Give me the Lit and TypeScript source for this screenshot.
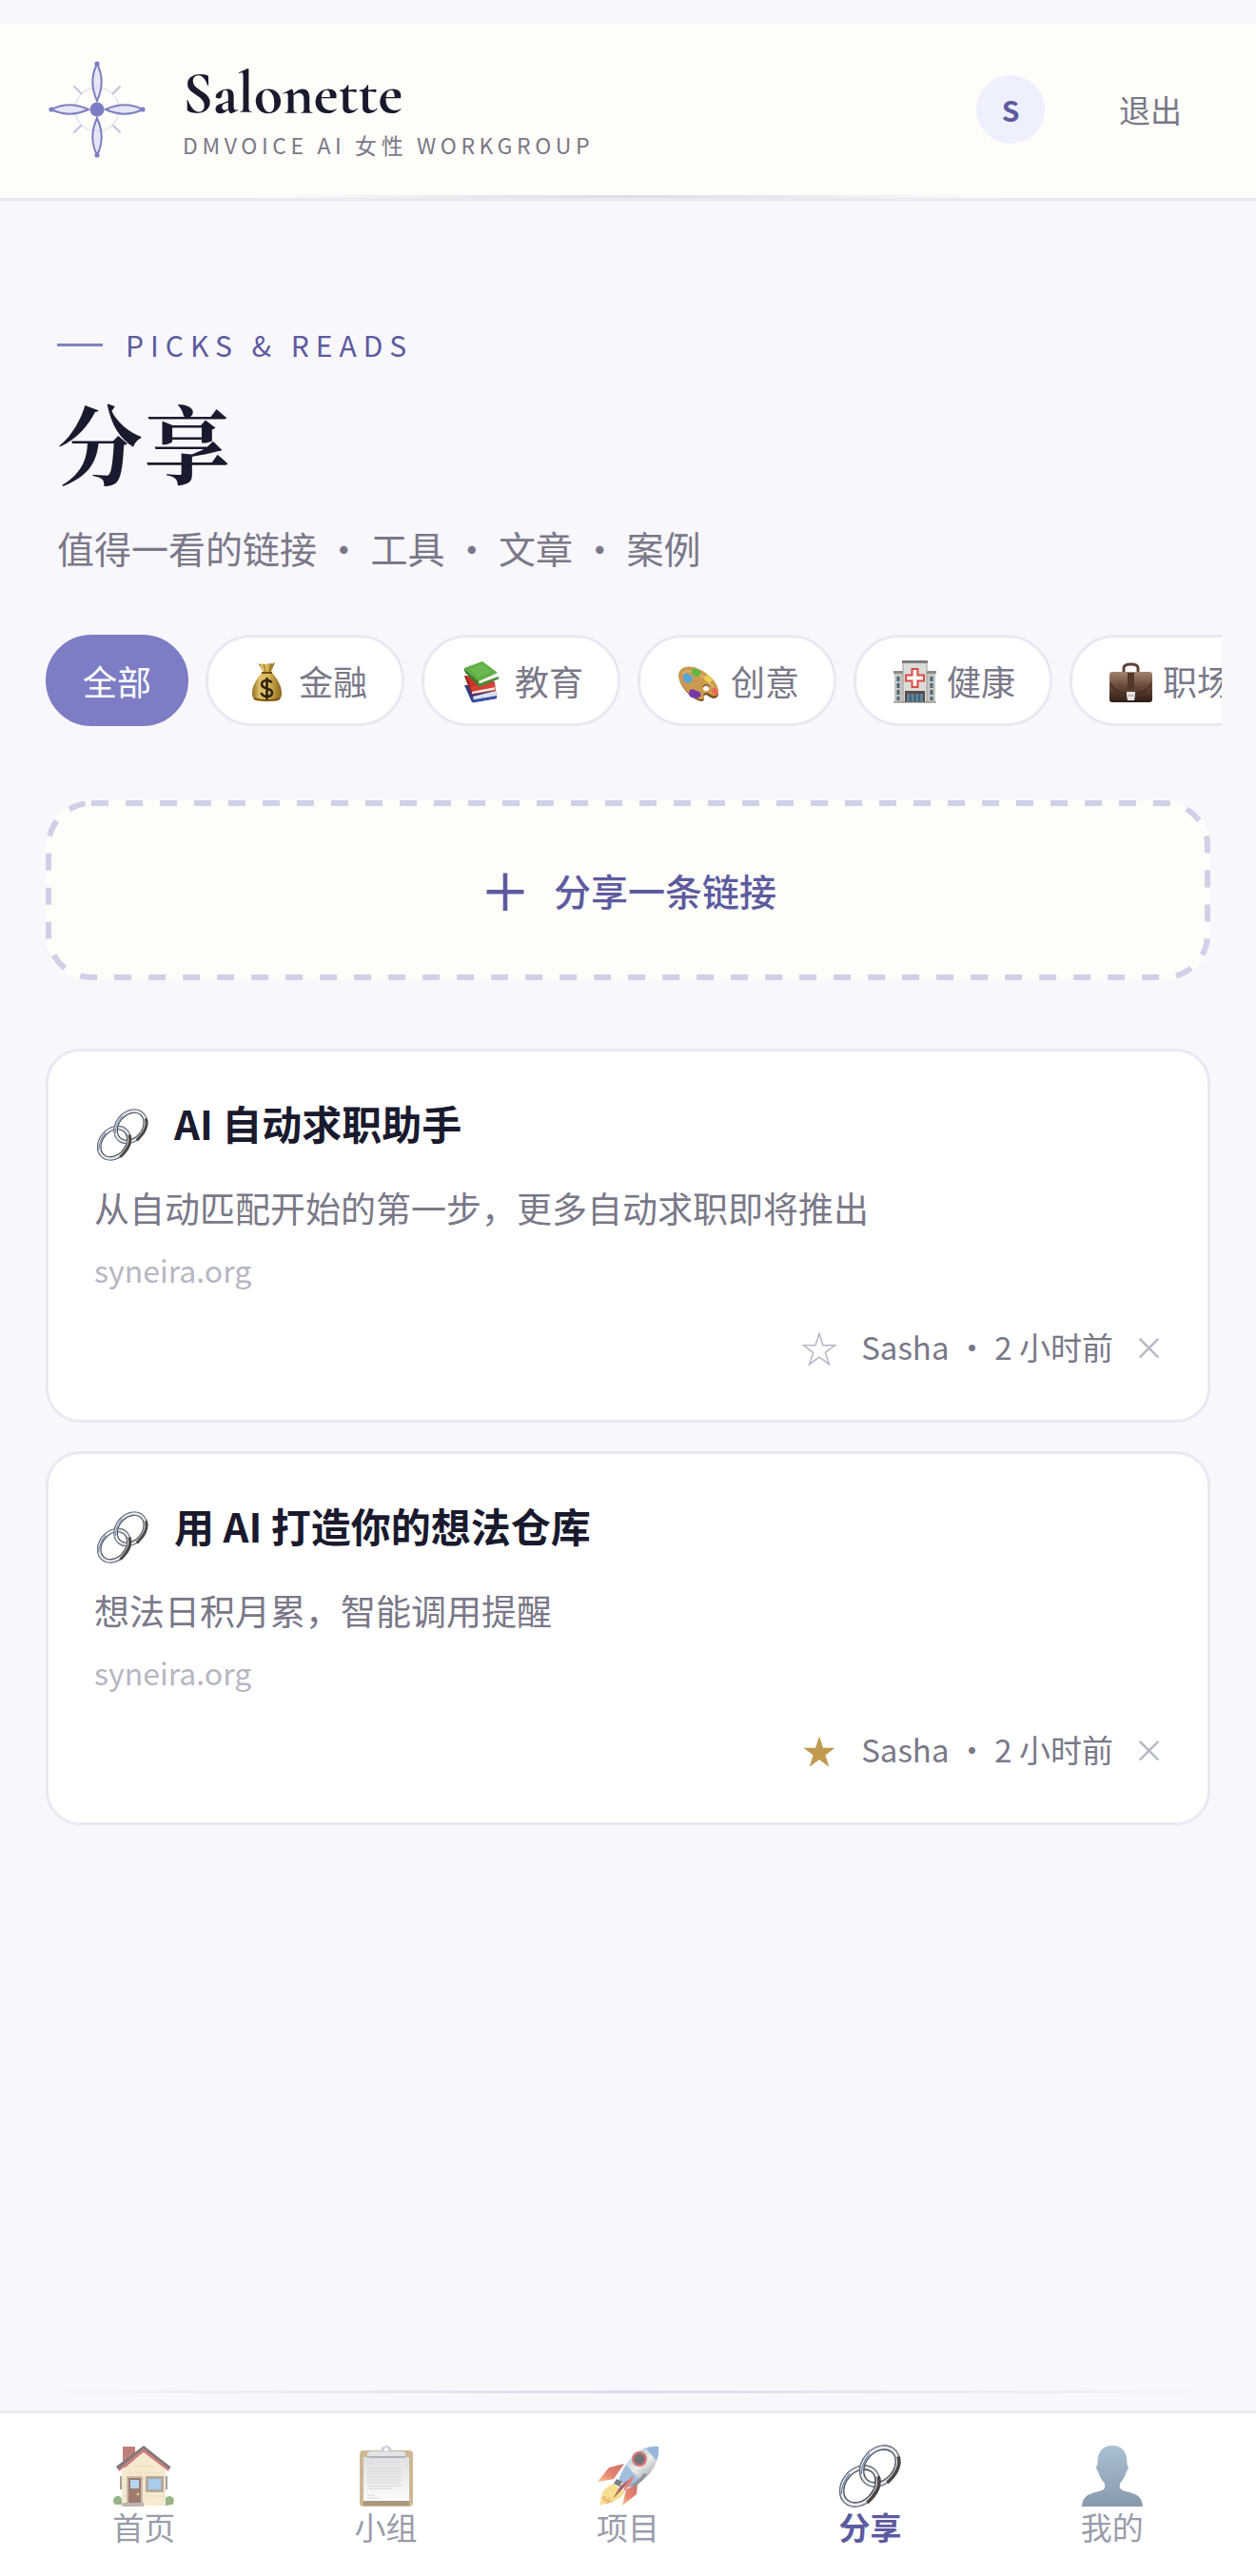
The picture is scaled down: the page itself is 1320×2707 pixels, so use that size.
import { LitElement, html, css, svg, nothing, type TemplateResult } from "lit";
import { customElement, property, state } from "lit/decorators.js";
import { classMap } from "lit/directives/class-map.js";

const ring = svg`
  <g fill="none">
    <ellipse rx="21.500" ry="16.500" stroke="#3c383a" stroke-width="5.400"/>
    <ellipse rx="21.700" ry="16.700" stroke="#7f8b9c" stroke-width="4.200"/>
    <ellipse rx="21.600" ry="16.600" stroke="#eceff3" stroke-width="2.400"/>
    <path d="M-8 17.500Q14 19.500 20.500 8" stroke="#4d4645" stroke-width="3.600"/>
    <path d="M-19 -9Q-11 -16 3 -16.500" stroke="#6a81a8" stroke-width="1.200"/>
  </g>`;

const linkIcon = html`<svg class="pic" viewBox="0 0 64 64" aria-hidden="true">
  <defs><clipPath id="link-over"><rect x="30" y="32" width="20" height="20"/></clipPath></defs>
  <g transform="translate(21.500 42.500) rotate(-49)">${ring}</g>
  <g transform="translate(42.500 21.500) rotate(-49)">${ring}</g>
  <g clip-path="url(#link-over)"><g transform="translate(21.500 42.500) rotate(-49)">${ring}</g></g>
</svg>`;

const moneyIcon = html`<svg class="pic" viewBox="0 0 45 45" aria-hidden="true">
  <defs><linearGradient id="gold"><stop offset="0" stop-color="#8f6c1d"/><stop offset=".25" stop-color="#e0c26a"/><stop offset=".55" stop-color="#dcb95a"/><stop offset="1" stop-color="#8a6418"/></linearGradient></defs>
  <path d="M13 3q3 2 5 0 3 2 6 0 3 2 7-1-2 5-4 10H18Q16 7 13 3z" fill="url(#gold)"/>
  <path d="M19 4l2 8M27 3l-2 9" stroke="#8a6a22" stroke-width="1" fill="none"/>
  <path d="M17 13h11c5 6 10 13 10 22 0 6-4 8-8 8H15c-5 0-8-3-8-8 0-9 5-16 10-22z" fill="url(#gold)"/>
  <path d="M17 13h11" stroke="#6f4f16" stroke-width="2"/>
  <path d="M9 40q13 4 27 0" stroke="#7b5715" stroke-width="2" fill="none"/>
  <path d="M27.500 23.500c-1-2-3-2.500-5-2.500-3 0-5.500 1.500-5.500 4 0 6 11 3 11 9 0 3-2.500 4-5.500 4s-5-1.500-6-4M22.500 18v23" stroke="#2d2413" stroke-width="2.600" fill="none"/>
</svg>`;

const booksIcon = html`<svg class="pic" viewBox="0 0 45 45" aria-hidden="true">
  <path d="M3 26l8 18 26-4-1-8-16-6z" fill="#2c3f86"/><path d="M12 38l24-6 1 6-24 4z" fill="#dfe2ec"/><path d="M11 41.500l26-4.500v3L12 44.500z" fill="#3a52a5"/>
  <path d="M3 16l8 20 25-4-1-9-12-6z" fill="#c9342b"/><path d="M11 32l24-4v3L11 35z" fill="#f0ece4"/><path d="M3 16l8 20v-5L5 17z" fill="#8d1f1b"/><path d="M9 28l26-6v6l-24 5z" fill="#d44135"/>
  <path d="M3 8L22 1l16 12-20 10z" fill="#5fae45"/><path d="M3 8l15 15v4L4 13q-2-3-1-5z" fill="#37812c"/><path d="M18 22l20-9-1 6-18 7z" fill="#f4f2e9"/><path d="M17 25l22-8v2.500L18 28z" fill="#3f8c33"/><path d="M8 9l14-5 10 7-14 7z" fill="#78c25b" opacity=".5"/>
</svg>`;

const paletteIcon = html`<svg class="pic" viewBox="0 0 45 45" aria-hidden="true">
  <path d="M2 18C2 9 10 6 18 8c14 4 26 18 25 28-1 4-5 5-8 3-3-1-4-4-7-2-2 1 2 5-2 6C17 43 2 28 2 18z" fill="#7c5220"/>
  <path d="M1 16C1 8 9 5 17 7c14 4 27 17 26 27-1 4-5 4-8 2-3-2-5-3-7-1s2 5-2 6C17 42 1 26 1 16z" fill="#cc9a4f"/>
  <path d="M5 14q8-6 20 2 10 7 15 16" stroke="#dcb26b" stroke-width="2" fill="none"/>
  <circle cx="30" cy="29" r="3.200" fill="#fff"/><path d="M27 28a3.200 3.200 0 0 1 6 0" fill="none" stroke="#6f4618" stroke-width="1.200"/>
  <path d="M6 16q2-5 6-1 6 2 3 7-3 3-7 1-3-3-2-7z" fill="#58a5d8"/>
  <path d="M16 9q3-2 5 1 5 1 3 5-3 3-7 1-4-3-1-7z" fill="#5cbb45"/>
  <path d="M29 16q4-2 4 1 5 1 3 5-3 2-5 0-5-2-2-6z" fill="#ecd04e"/>
  <path d="M36 30q3-3 5 0 3 5 0 7-3-1-5-4z" fill="#ea6a58"/>
  <path d="M13 31q3-2 7 1 6 1 4 6-3 3-6 1-4 1-6-3z" fill="#7438ac"/>
</svg>`;

const hospitalIcon = html`<svg class="pic" viewBox="0 0 45 45" aria-hidden="true">
  <path d="M1 13h43v31H1z" fill="#c6c6c2"/><path d="M0 11h45v3H0z" fill="#8b8d8b"/>
  <path d="M10 1h25v43H10z" fill="#dcdcd8"/><path d="M9 0h27v3H9z" fill="#7d7f7d"/>
  <path d="M5 17v25M40 17v25" stroke="#4a6777" stroke-width="3" stroke-dasharray="5 2"/>
  <path d="M19.500 9h6v6.500h6.500v6h-6.500V28h-6v-6.500H13v-6h6.500z" fill="#fff4f2" stroke="#d84a45" stroke-width="2"/>
  <path d="M12 32h21v12H12z" fill="#5a4b46"/><path d="M14 35h17v9H14z" fill="#5f8298"/><path d="M18 35v9M22.500 35v9M27 35v9" stroke="#2f4857"/>
  <path d="M10 3v41M35 3v41" stroke="#9c9c97"/><path d="M0 44h45" stroke="#77726b"/>
</svg>`;

const briefcaseIcon = html`<svg class="pic" viewBox="0 0 45 45" aria-hidden="true">
  <defs><linearGradient id="leather" x2="0" y2="1"><stop offset="0" stop-color="#a38470"/><stop offset=".45" stop-color="#6b4c3c"/><stop offset="1" stop-color="#2f1d15"/></linearGradient></defs>
  <path d="M15 14V8q0-4 7.500-4T30 8v6" fill="none" stroke="#5e4437" stroke-width="3"/>
  <rect y="12" width="45" height="32" rx="3" fill="url(#leather)"/>
  <path d="M1 24q4 9 16 11h11q12-2 16-11" stroke="#3e281d" fill="none" stroke-width="1.200"/>
  <path d="M19 13h7v17h-7z" fill="#4f372b"/>
  <path d="M18 33h9v4l-1 5h-7l-1-5z" fill="#e8e6e3"/><path d="M18.500 37h8" stroke="#9a9692"/>
</svg>`;

const houseIcon = html`<svg class="pic" viewBox="0 0 64 64" aria-hidden="true">
  <path d="M10 1h13v22H10z" fill="#9e3a33"/>
  <path d="M9 26L33 6l22 19v38H9z" fill="#f0deb6"/>
  <path d="M9 35h46M9 41h46M9 47h46M9 53h46M15 29h34M22 22h20" stroke="#dcc797" stroke-width=".8"/>
  <path d="M4 22L32 1l28 21-2 5L32 7 6 27z" fill="#b23a36"/><path d="M3 22L32 0l29 23-3 1L32 3 5 25z" fill="#3b3335"/>
  <path d="M14 32h17v28H14z" fill="#ae977d"/><path d="M16 34h13v26H16z" fill="#6c3423"/><path d="M18 36h9v9h-9z" fill="#8fc0ea"/><circle cx="26" cy="51" r="1.400" fill="#e2b74c"/>
  <path d="M34 32h19v17H34z" fill="#8f7c68"/><path d="M37 35h13v11H37z" fill="#78b1e6"/>
  <path d="M55 32h2v14h-2zM7 32h2v14H7z" fill="#756c66"/>
  <path d="M0 59q0-7 6-6 3 1 3 5v4H2zM55 63v-8q4-4 8 0 2 5-1 7z" fill="#5f8d44"/><path d="M10 60h22v4H9z" fill="#9c8d86"/>
</svg>`;

const clipboardIcon = html`<svg class="pic" viewBox="0 0 64 64" aria-hidden="true">
  <defs><linearGradient id="sheet" x2="0" y2="1"><stop offset="0" stop-color="#d0d0d4"/><stop offset="1" stop-color="#fbfbfc"/></linearGradient></defs>
  <rect x="4" y="5" width="56" height="59" rx="4" fill="#b4935c"/><path d="M8 57h48v6H8z" fill="#7d6237"/>
  <path d="M8 12h48v46H8z" fill="url(#sheet)"/>
  <path d="M12 19h7M12 24h34M12 27h36M12 30h35M12 33h37M12 36h36M12 39h35M12 42h37M12 45h27M12 52h8M12 55h12" stroke="#b0b0b3" stroke-width=".8"/>
  <path d="M12 9q0-3 4-3h32q4 0 4 3v4H12z" fill="#d3d6dc"/><path d="M12 12h40" stroke="#70757d" stroke-width="1.500"/>
  <path d="M26 7q0-7 6-7t6 7" fill="#b3bac8"/><circle cx="32" cy="4" r="2" fill="#fff"/>
</svg>`;

const rocketIcon = html`<svg class="pic" viewBox="0 0 64 64" aria-hidden="true">
  <defs><linearGradient id="hull" x1=".2" y1=".1" x2=".8" y2=".9"><stop offset="0" stop-color="#6d9fd3"/><stop offset=".5" stop-color="#e6e4dd"/><stop offset="1" stop-color="#5a6673"/></linearGradient>
  <linearGradient id="fin" x1="1" y1="0" x2="0" y2="1"><stop offset="0" stop-color="#b0241c"/><stop offset=".6" stop-color="#dd4526"/><stop offset="1" stop-color="#f2b04c"/></linearGradient></defs>
  <path d="M28 19L12 23 0 38l17-3z" fill="url(#fin)"/><path d="M42 40l-1 11-15 12 4-17z" fill="url(#fin)"/>
  <path d="M17 40Q5 44 4 55l-2 8 13-4q10-3 13-10z" fill="#f5ce55"/><path d="M4 55l4-1-1 4 5-2-2 4 6-2" stroke="#e68a2c" fill="none" stroke-width="1.500"/>
  <path d="M64 1Q38-2 23 33l9 10Q64 34 64 1z" fill="url(#hull)"/>
  <path d="M64 1q-7-1-13 2l11 13q3-7 2-15z" fill="#5f91c8"/>
  <path d="M30 20q-5 8-8 16l11 8q6-2 12-7z" fill="#6f9ccc"/><path d="M33 42q8-3 16-13l3 1q-6 10-14 13z" fill="#54606e"/>
  <circle cx="44" cy="14" r="8" fill="#b8302c"/><circle cx="44" cy="14" r="5.500" fill="#262a30"/>
  <path d="M20 35l6 3-3 5-6-3z" fill="#303842"/><path d="M37 33L26 46l-10 10 8-14z" fill="#7a1c1a"/><path d="M38 31q-1 8-11 18 2-11 11-18z" fill="#d23a2d"/>
</svg>`;

const personIcon = html`<svg class="pic" viewBox="0 0 64 64" aria-hidden="true">
  <defs><linearGradient id="bust" x2="0" y2="1"><stop offset="0" stop-color="#7f9fbc"/><stop offset="1" stop-color="#4a6380"/></linearGradient></defs>
  <path d="M32 0c11 0 16 7 15.500 20 2 1 1.500 5-.5 7-2 7-5 10-7 13-1 5 1 7 6 8 12 3 17 5 18 16H0c1-11 6-13 18-16 5-1 7-3 6-8-2-3-5-6-7-13-2-2-2.500-6-.5-7C16 7 21 0 32 0z" fill="url(#bust)"/>
</svg>`;

const logo = html`<svg class="logo" viewBox="-54 -54 108 108" aria-hidden="true">
  <circle r="23" fill="none" stroke="#e4e4f2" stroke-width="1.500"/>
  <g stroke="#c2c2e2" stroke-width="2" stroke-linecap="round"><path d="M-24-24l7 7M24-24l-7 7M-24 24l7-7M24 24l-7-7"/></g>
  ${[0, 90, 180, 270].map((turn) => svg`<g transform="rotate(${turn})">
    <path d="M0-48C6-36 6-22 0-9-6-22-6-36 0-48z" fill="#dcdcf5" fill-opacity=".7" stroke="#7e7fc0" stroke-width="2"/>
    <circle cy="-48" r="2.600" fill="#7c7dc4"/></g>`)}
  <circle r="7.500" fill="#7c7dc4"/>
</svg>`;

interface Share { title: string; desc: string; host: string; author: string; age: string; starred: boolean }

const shares: Share[] = [
  { title: "AI 自动求职助手", desc: "从自动匹配开始的第一步，更多自动求职即将推出", host: "syneira.org", author: "Sasha", age: "2 小时前", starred: false },
  { title: "用 AI 打造你的想法仓库", desc: "想法日积月累，智能调用提醒", host: "syneira.org", author: "Sasha", age: "2 小时前", starred: true },
];

const topics: { label: string; icon?: TemplateResult }[] = [
  { label: "全部" },
  { label: "金融", icon: moneyIcon },
  { label: "教育", icon: booksIcon },
  { label: "创意", icon: paletteIcon },
  { label: "健康", icon: hospitalIcon },
  { label: "职场", icon: briefcaseIcon },
];

const tabs: { label: string; icon: TemplateResult; active?: boolean }[] = [
  { label: "首页", icon: houseIcon },
  { label: "小组", icon: clipboardIcon },
  { label: "项目", icon: rocketIcon },
  { label: "分享", icon: linkIcon, active: true },
  { label: "我的", icon: personIcon },
];

const base = css`
  :host, * { box-sizing: border-box; }
  h1, h2, p { margin: 0; font-weight: 400; }
  button { font: inherit; color: inherit; background: none; border: 0; padding: 0; cursor: pointer; }
  a { color: inherit; text-decoration: none; }
  .pic { display: block; width: 100%; height: 100%; overflow: visible; }
`;

@customElement("share-card")
export class ShareCard extends LitElement {
  @property({ attribute: false }) share!: Share;

  static styles = [base, css`
    :host { display: block; }
    .card { padding: 42px 48px 49px; background: #fff; border: 3px solid #eae8f2; border-radius: 36px; }
    .head { display: flex; gap: 24px; align-items: flex-start; }
    .icon { flex: none; width: 60px; height: 75px; padding: 19px 3px 3px; }
    .icon .pic { height: 53px; width: 53px; }
    .title { font-size: 42px; line-height: 66px; font-weight: 600; color: #1a1a2e; }
    .desc { margin-top: 16px; font-size: 37px; line-height: 62px; color: #7a7888; }
    .host { display: block; margin-top: 10px; font-size: 32px; line-height: 48px; color: #b8b6c4; }
    .meta { display: flex; justify-content: flex-end; align-items: center; gap: 24px; margin-top: 29px; font-size: 33px; line-height: 56px; color: #7a7888; }
    .star { display: flex; width: 40px; height: 42px; padding: 6px 2px 0; color: #b8b6c4; }
    .star .pic { fill: none; stroke: currentColor; stroke-width: 1.5; }
    .starred { color: #c09a4e; }
    .starred .pic { fill: currentColor; stroke: none; }
    .remove { display: flex; justify-content: center; width: 27px; font-size: 33px; line-height: 56px; color: #b8b6c4; }
  `];

  render() {
    const s = this.share;
    return html`<article class="card">
      <div class="head"><span class="icon">${linkIcon}</span><h2 class="title">${s.title}</h2></div>
      <p class="desc">${s.desc}</p>
      <a class="host" href="#">${s.host}</a>
      <div class="meta">
        <button class=${classMap({ star: true, starred: s.starred })} aria-label="收藏" aria-pressed=${s.starred}>
          <svg class="pic" viewBox="0 0 36 36"><path d="M18 1.500l4 12.300h12.500L24.400 21.400l4 12.300L18 26.100 7.600 33.700l4-12.300L1.500 13.800H14z"/></svg>
        </button>
        <span>${s.author} ・ ${s.age}</span>
        <button class="remove" aria-label="删除">×</button>
      </div>
    </article>`;
  }
}

@customElement("app-root")
export class AppRoot extends LitElement {
  @state() private topic = "全部";

  static styles = [base, css`
    :host { display: flex; flex-direction: column; min-height: 100vh; padding-top: 25px; background: #f8f7fc; color: #1a1a2e;
      font-family: "Noto Sans CJK SC", "Noto Sans", sans-serif; }
    .header { position: relative; display: flex; align-items: center; padding: 36px 48px 39px; background: #fefdf9; border-bottom: 3px solid #eae8f2; }
    .header::after { content: ""; position: absolute; left: 20%; right: 20%; bottom: 0; height: 3px; background: linear-gradient(90deg, transparent, #dcdbe9, transparent); }
    .logo { flex: none; width: 108px; height: 108px; margin-right: 36px; }
    .brand { flex: 1; }
    .name { font-family: "Cormorant Garamond", "Liberation Serif", serif; font-size: 62px; line-height: 72px; font-weight: 700; }
    .tagline { margin-top: 2px; font-size: 23px; line-height: 30px; letter-spacing: 0.2em; color: #7a7888; }
    .avatar { width: 72px; height: 72px; border-radius: 50%; background: #eef0fe; color: #5d5b9f; font-size: 30px; line-height: 72px; font-weight: 600; text-align: center; }
    .logout { margin-left: 48px; padding: 0 30px; font-size: 33px; line-height: 48px; color: #7a7888; }

    .main { flex: 1; padding: 129px 48px 48px; }
    .hero { padding: 0 12px; }
    .eyebrow { display: flex; align-items: center; gap: 24px; font-size: 30px; line-height: 45px; letter-spacing: 7px; color: #5d5b9f; }
    .eyebrow::before { content: ""; width: 48px; height: 3px; background: #8281bd; }
    .title { margin-top: 35px; font-family: "Cormorant Garamond", "Noto Serif CJK SC", "Noto Serif SC", "Noto Sans CJK SC", serif; font-size: 90px; line-height: 108px; font-weight: 700; letter-spacing: 0.02em; }
    .lead { margin-top: 17px; font-size: 39px; line-height: 60px; color: #7a7888; }

    .topics { display: flex; gap: 18px; margin: 62px -12px 0 0; overflow: hidden; }
    .topic { display: flex; align-items: center; flex: none; height: 96px; padding: 0 36px; border: 3px solid #eae8f2; border-radius: 48px; background: #fff; font-size: 36px; line-height: 54px; color: #7a7888; }
    .topic.on { background: #7c7dc4; border-color: #7c7dc4; color: #fff; }
    .emoji { width: 51px; height: 48px; margin-right: 8px; padding: 3px 3px 0; }
    .emoji .pic { height: 45px; }

    .add { position: relative; display: flex; justify-content: center; align-items: center; gap: 24px; width: 100%; height: 189px; margin-top: 78px; padding-bottom: 2px; border-radius: 48px; background: #fefdf9; color: #5d5b9f; font-size: 39px; line-height: 60px; font-weight: 500; }
    .dashes { position: absolute; inset: 0; width: 100%; height: 100%; }
    .dashes rect { width: calc(100% - 6px); height: calc(100% - 6px); fill: none; stroke: #d0d0e8; stroke-width: 6; stroke-dasharray: 18 18; }
    .plus { font-size: 54px; }

    .list { display: grid; gap: 30px; margin-top: 72px; }

    .rule { height: 3px; margin-bottom: 18px; background: linear-gradient(90deg, transparent, #dcdbef 50%, transparent); }
    .nav { display: flex; padding: 33px 24px 32px; background: #fff; border-top: 3px solid #eae8f2; }
    .tab { flex: 1; display: flex; flex-direction: column; align-items: center; font-size: 33px; line-height: 40px; color: #9a9caa; }
    .tab .pic { width: 64px; height: 66px; opacity: 0.65; }
    .tab.on { color: #5d5b9f; font-weight: 600; }
    .tab.on .pic { opacity: 1; }
  `];

  render() {
    return html`
      <header class="header">
        ${logo}
        <div class="brand">
          <div class="name">Salonette</div>
          <div class="tagline">DMVOICE AI 女性 WORKGROUP</div>
        </div>
        <div class="avatar">S</div>
        <button class="logout">退出</button>
      </header>
      <main class="main">
        <div class="hero">
          <p class="eyebrow">PICKS &amp; READS</p>
          <h1 class="title">分享</h1>
          <p class="lead">值得一看的链接 ・ 工具 ・ 文章 ・ 案例</p>
        </div>
        <div class="topics">
          ${topics.map((t) => html`<button class=${classMap({ topic: true, on: t.label === this.topic })} @click=${() => (this.topic = t.label)}>
            ${t.icon ? html`<span class="emoji">${t.icon}</span>` : nothing}${t.label}</button>`)}
        </div>
        <button class="add">
          <svg class="dashes" aria-hidden="true"><rect x="3" y="3" rx="45"/></svg>
          <span class="plus">＋</span><span>分享一条链接</span>
        </button>
        <section class="list">${shares.map((s) => html`<share-card .share=${s}></share-card>`)}</section>
      </main>
      <div class="rule"></div>
      <nav class="nav">
        ${tabs.map((t) => html`<a href="#" class=${classMap({ tab: true, on: !!t.active })}>${t.icon}<span>${t.label}</span></a>`)}
      </nav>
    `;
  }
}
